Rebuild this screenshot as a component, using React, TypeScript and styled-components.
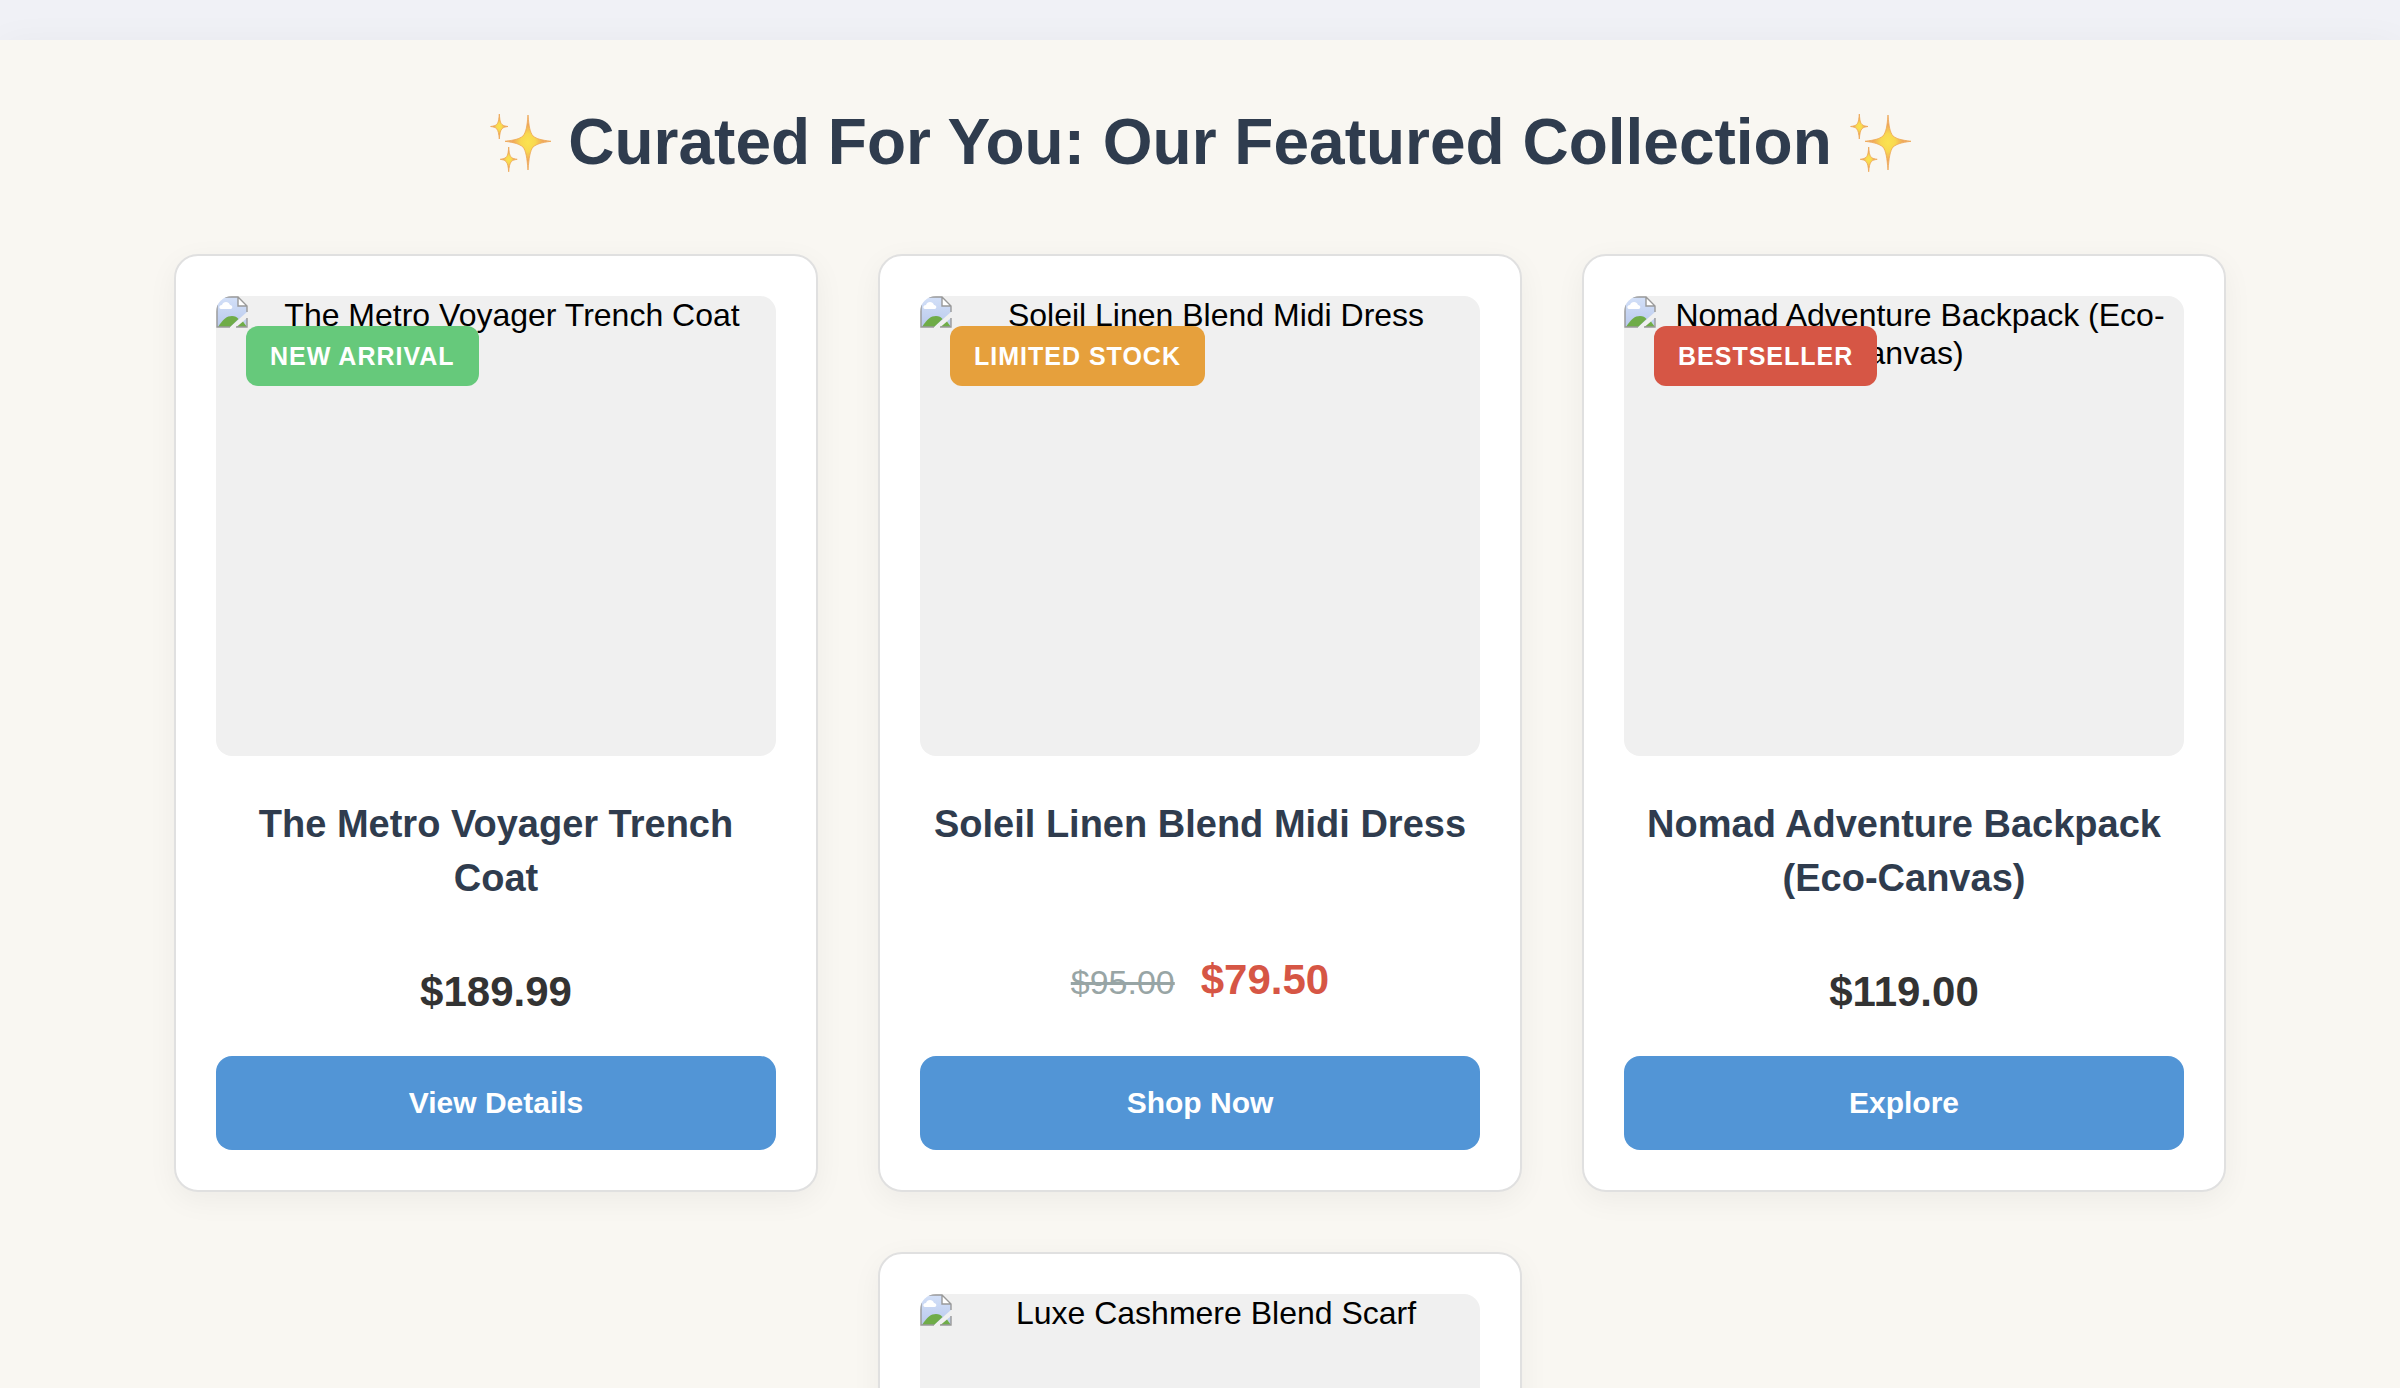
import React from "react";
import styled, { createGlobalStyle } from "styled-components";

const GlobalStyle = createGlobalStyle`
  *, *::before, *::after { box-sizing: border-box; }
  body {
    margin: 0;
    background: #f0f1f6;
    color: #333;
    font-family: "Liberation Sans", Arial, Helvetica, sans-serif;
    font-size: 32px;
  }
`;

const Page = styled.div`
  padding-top: 40px;
  overflow-x: clip;
  max-height: 100vh;
  overflow-y: clip;
`;

const Collection = styled.section`
  padding: 60px 40px;
  background: #f9f7f2;
  box-shadow: 0 8px 40px rgba(0, 0, 0, 0.05);
`;

const Heading = styled.h2`
  display: flex;
  justify-content: center;
  align-items: center;
  gap: 16px;
  margin: 0 0 70px;
  color: #2f3c4e;
  font-size: 64px;
  line-height: 84px;
  font-weight: 700;
  text-align: center;
`;

const Products = styled.div`
  display: flex;
  flex-wrap: wrap;
  justify-content: center;
  gap: 60px;
`;

const Card = styled.article`
  display: flex;
  flex-direction: column;
  width: 644px;
  min-height: 938px;
  padding: 40px;
  border: 2px solid #e0e0e0;
  border-radius: 24px;
  background: #fff;
  box-shadow: 0 8px 30px rgba(0, 0, 0, 0.05);
  text-align: center;
`;

const Photo = styled.div`
  position: relative;
  height: 460px;
  border-radius: 16px;
  overflow: hidden;
  background: #f0f0f0;
  color: #000;
  line-height: 38px;
`;

const MissingIcon = styled.svg`
  float: left;
  width: 32px;
  height: 32px;
`;

const Badge = styled.span<{ $color: string }>`
  position: absolute;
  top: 30px;
  left: 30px;
  padding: 0 24px;
  border-radius: 12px;
  background: ${(p) => p.$color};
  color: #fff;
  font-size: 25px;
  line-height: 60px;
  font-weight: 700;
  letter-spacing: 1px;
  text-transform: uppercase;
`;

const Name = styled.h3`
  margin: 41px 0 0;
  color: #2f3c4e;
  font-size: 38px;
  line-height: 54px;
  font-weight: 700;
`;

const PriceRow = styled.p<{ $sale: boolean }>`
  display: flex;
  justify-content: center;
  align-items: baseline;
  gap: 26px;
  margin: auto 0 ${(p) => (p.$sale ? 49 : 39)}px;
  line-height: 50px;
`;

const Price = styled.strong<{ $sale: boolean }>`
  color: ${(p) => (p.$sale ? "#d65645" : "#333")};
  font-size: 42px;
`;

const OldPrice = styled.s`
  color: #98a5a5;
  font-size: 34px;
`;

const Action = styled.button`
  width: 100%;
  padding: 0 24px;
  border: 0;
  border-radius: 16px;
  background: #5295d6;
  color: #fff;
  font: 700 30px/94px "Liberation Sans", Arial, Helvetica, sans-serif;
  cursor: pointer;
`;

const SparkleIcon = styled.svg`
  flex: none;
  width: 64px;
  height: 64px;
`;

function Sparkles({ id }: { id: string }) {
  return (
    <SparkleIcon viewBox="0 0 64 64" aria-hidden="true">
      <defs>
        <radialGradient id={id}>
          <stop offset="0" stopColor="#fbe34f" />
          <stop offset="0.32" stopColor="#f8d850" />
          <stop offset="0.65" stopColor="#f0a85a" />
          <stop offset="1" stopColor="#eeb48a" />
        </radialGradient>
      </defs>
      <g fill={`url(#${id})`} stroke="#eda653" strokeWidth="0.8" strokeLinejoin="round">
        <path d="M40 5C41 17 42 22 45 26C49 29 53 30 63 31.300C53 32.600 49 34 45 37C42 41 41 48 40 60C39 48 38 41 35 37C31 34 27 32.600 17 31.300C27 30 31 29 35 26C38 22 39 17 40 5Z" />
        <path d="M11.300 4C11.800 10 12.300 13 14 14.500C15.500 15.800 17 16 20 16.500C17 17 15.500 17.300 14 18.700C12.300 20.500 11.800 24 11.300 29C10.800 24 10.300 20.500 8.600 18.700C7.100 17.300 5.600 17 2.600 16.500C5.600 16 7.100 15.800 8.600 14.500C10.300 13 10.800 10 11.300 4Z" />
        <path d="M20.700 37C21.200 43 21.700 45.800 23.400 47.300C24.900 48.600 26.400 48.800 29.200 49.300C26.400 49.800 24.900 50.100 23.400 51.500C21.700 53.300 21.200 56.800 20.700 61.800C20.200 56.800 19.700 53.300 18 51.500C16.500 50.100 15 49.800 12.200 49.300C15 48.800 16.500 48.600 18 47.300C19.700 45.800 20.200 43 20.700 37Z" />
      </g>
    </SparkleIcon>
  );
}

function MissingImage({ id }: { id: string }) {
  return (
    <MissingIcon viewBox="0 0 32 32" aria-hidden="true">
      <defs>
        <linearGradient id={id} x1="0" y1="0" x2="0" y2="1">
          <stop offset="0" stopColor="#d3e0f8" />
          <stop offset="1" stopColor="#b9c9ec" />
        </linearGradient>
      </defs>
      <path d="M1 1H22L31 10V16L14 31H1Z" fill={`url(#${id})`} />
      <path d="M2 31C7 23 11 20 16 20C19 20 21 21 22.500 23L14 31Z" fill="#6fac48" />
      <path d="M27 25.500L31 22V31Z" fill="#c0cfee" />
      <path d="M20.500 31L27 25.500L31 31Z" fill="#6fac48" />
      <path d="M5 13C2.500 12.500 3 9 6 9C7 5 13 5 14 9C17 9 17 13 14.500 13Z" fill="#fff" />
      <path d="M22 1V10H31Z" fill="#fff" />
      <path d="M14 31H1V1H22L31 10V16M22 1V10H31M31 22V31H20" fill="none" stroke="#999" strokeWidth="1.400" />
    </MissingIcon>
  );
}

interface Product {
  id: string;
  name: string;
  badge?: string;
  badgeColor?: string;
  price: string;
  oldPrice?: string;
  action: string;
}

const products: Product[] = [
  { id: "coat", name: "The Metro Voyager Trench Coat", badge: "New Arrival", badgeColor: "#66c97b", price: "$189.99", action: "View Details" },
  { id: "dress", name: "Soleil Linen Blend Midi Dress", badge: "Limited Stock", badgeColor: "#e6a03c", price: "$79.50", oldPrice: "$95.00", action: "Shop Now" },
  { id: "backpack", name: "Nomad Adventure Backpack (Eco-Canvas)", badge: "Bestseller", badgeColor: "#d65645", price: "$119.00", action: "Explore" },
];

export default function App() {
  return (
    <>
      <GlobalStyle />
      <Page>
        <Collection>
          <Heading>
            <Sparkles id="sparkle-start" />
            Curated For You: Our Featured Collection
            <Sparkles id="sparkle-end" />
          </Heading>
          <Products>
            {products.map((product) => (
              <Card key={product.id}>
                <Photo>
                  <MissingImage id={`sky-${product.id}`} />
                  {product.name}
                  {product.badge && <Badge $color={product.badgeColor ?? "#333"}>{product.badge}</Badge>}
                </Photo>
                <Name>{product.name}</Name>
                <PriceRow $sale={Boolean(product.oldPrice)}>
                  {product.oldPrice && <OldPrice>{product.oldPrice}</OldPrice>}
                  <Price $sale={Boolean(product.oldPrice)}>{product.price}</Price>
                </PriceRow>
                <Action type="button">{product.action}</Action>
              </Card>
            ))}
            <Card>
              <Photo>
                <MissingImage id="sky-scarf" />
                Luxe Cashmere Blend Scarf
              </Photo>
            </Card>
          </Products>
        </Collection>
      </Page>
    </>
  );
}
